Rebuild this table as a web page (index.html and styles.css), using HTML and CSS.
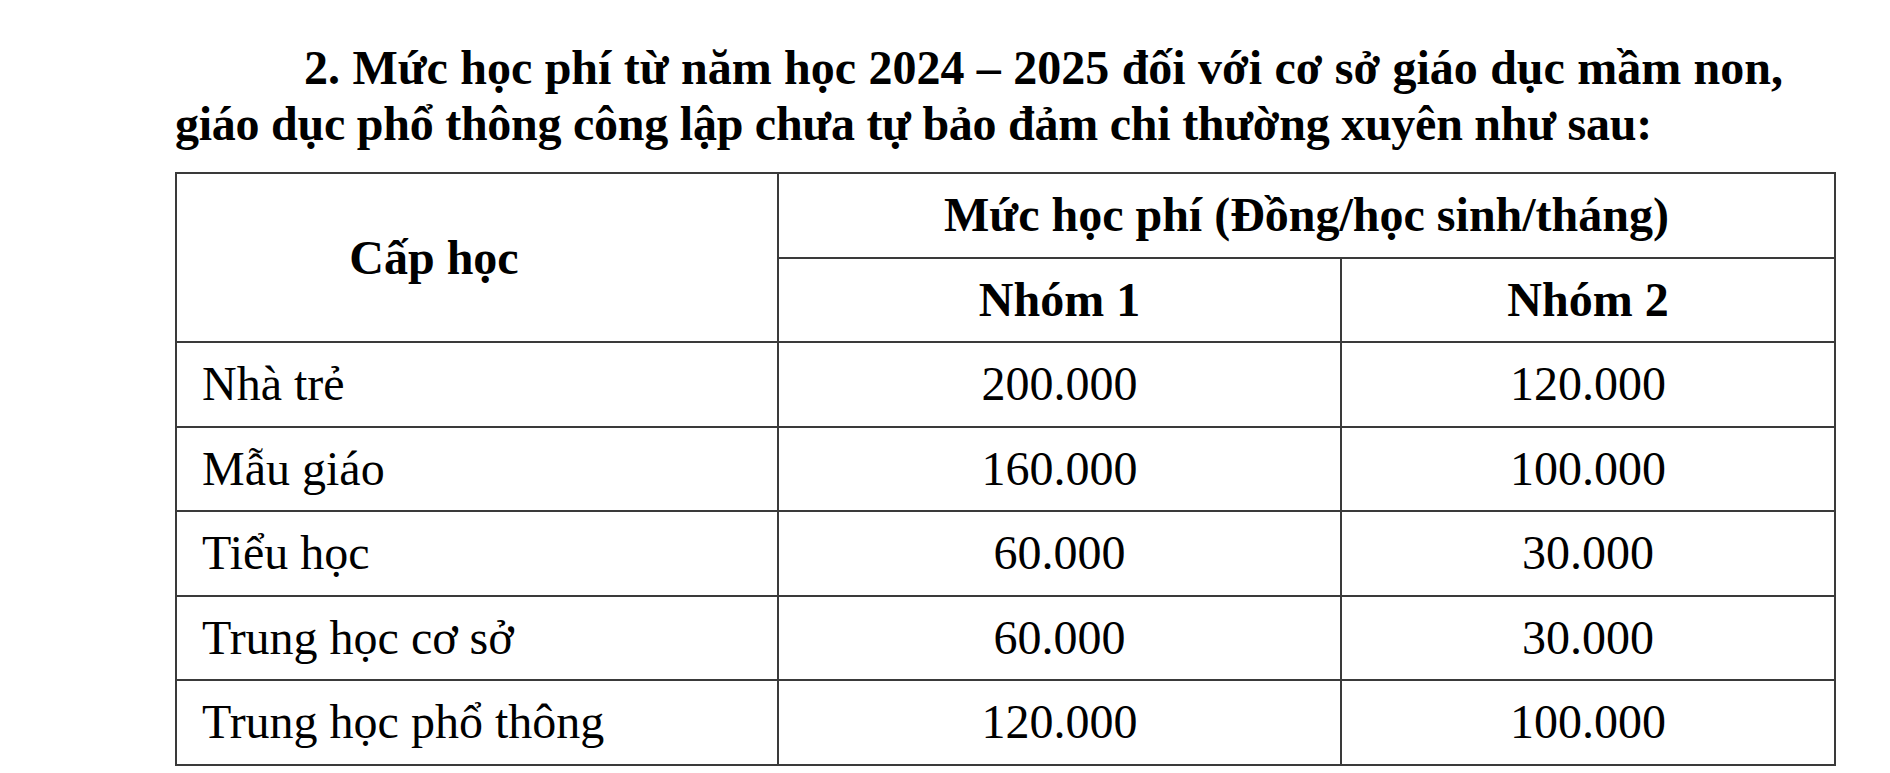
FILE: index.html
```html
<!DOCTYPE html>
<html lang="vi">
<head>
<meta charset="utf-8">
<link rel="stylesheet" href="styles.css">
</head>
<body>
<div class="page">
  <div class="heading">
    <span class="line1">2. Mức học phí từ năm học 2024 – 2025 đối với cơ sở giáo dục mầm non,</span>
    <span class="line2">giáo dục phổ thông công lập chưa tự bảo đảm chi thường xuyên như sau:</span>
  </div>
  <table class="fees">
    <colgroup>
      <col class="c1"><col class="c2"><col class="c3">
    </colgroup>
    <thead>
      <tr>
        <th rowspan="2" class="level">Cấp học</th>
        <th colspan="2">Mức học phí (Đồng/học sinh/tháng)</th>
      </tr>
      <tr>
        <th>Nhóm 1</th>
        <th>Nhóm 2</th>
      </tr>
    </thead>
    <tbody>
      <tr><td class="name">Nhà trẻ</td><td>200.000</td><td>120.000</td></tr>
      <tr><td class="name">Mẫu giáo</td><td>160.000</td><td>100.000</td></tr>
      <tr><td class="name">Tiểu học</td><td>60.000</td><td>30.000</td></tr>
      <tr><td class="name">Trung học cơ sở</td><td>60.000</td><td>30.000</td></tr>
      <tr><td class="name">Trung học phổ thông</td><td>120.000</td><td>100.000</td></tr>
    </tbody>
  </table>
</div>
</body>
</html>
```
FILE: styles.css
```css
html, body {
  margin: 0;
  padding: 0;
  background: #ffffff;
}
body {
  font-family: "Liberation Serif", "Times New Roman", serif;
  color: #000;
}
.page {
  padding: 40px 0 0 175px;
}
.heading {
  width: 1608px;
  font-weight: bold;
  font-size: 48px;
  line-height: 56px;
}
.line1 {
  display: block;
  text-indent: 129px;
  text-align: justify;
  text-align-last: justify;
  white-space: nowrap;
}
.line2 {
  display: block;
  white-space: nowrap;
  letter-spacing: -0.25px;
}
.fees {
  margin-top: 20px;
  border-collapse: collapse;
  width: 1659px;
  font-size: 48px;
  table-layout: fixed;
}
.c1 { width: 602px; }
.c2 { width: 563px; }
.c3 { width: 494px; }
.fees th, .fees td {
  border: 2px solid #3a3a3a;
  height: 82.5px;
  padding: 0;
  text-align: center;
  vertical-align: middle;
  line-height: 1;
}
.fees th {
  font-weight: bold;
}
.fees th.level {
  padding-right: 86px;
}
.fees td.name {
  text-align: left;
  padding-left: 25px;
}
```
